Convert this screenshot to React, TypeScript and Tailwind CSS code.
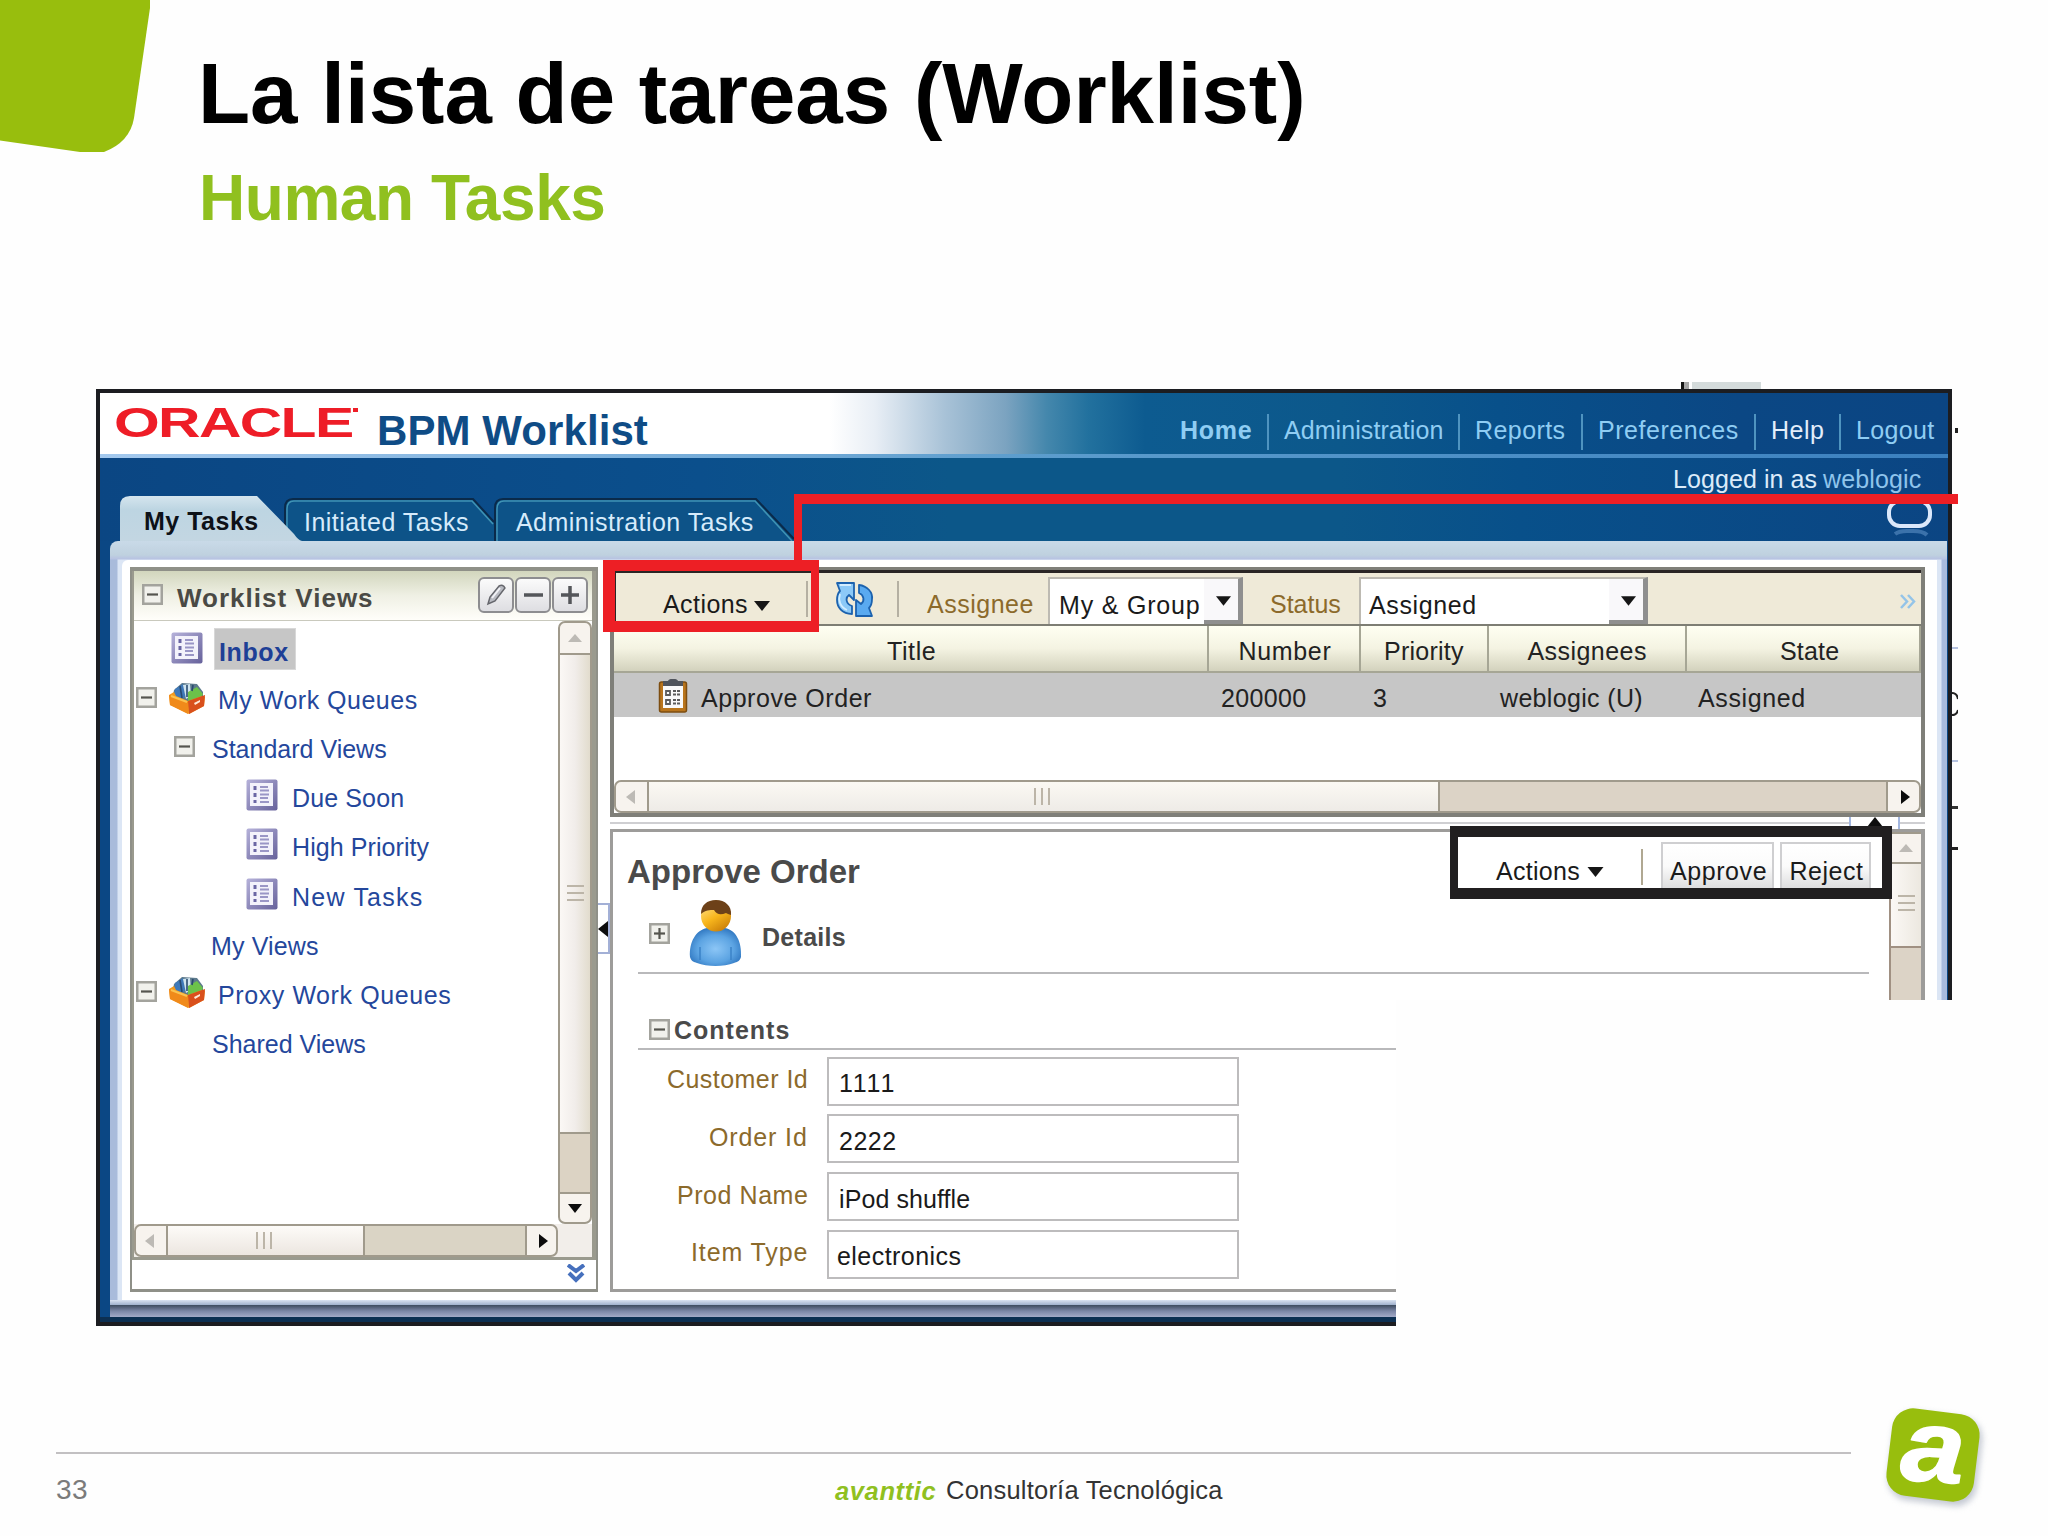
import { useLayoutEffect, useRef } from 'react';
import type { ReactNode } from 'react';
import { clsx } from 'clsx';

/* Single line of text, tracked so that it fills the width of its box. */
function Fit({ className, children }: { className?: string; children: string }) {
  const box = useRef<HTMLSpanElement>(null);
  const text = useRef<HTMLSpanElement>(null);

  useLayoutEffect(() => {
    if (!box.current || !text.current) return;
    text.current.style.letterSpacing = '0px';
    const spare = box.current.clientWidth - text.current.offsetWidth;
    text.current.style.letterSpacing = `${spare / children.length}px`;
  }, [children]);

  return (
    <span ref={box} className={clsx('block shrink-0 leading-none whitespace-nowrap', className)}>
      <span ref={text} className="inline-block">{children}</span>
    </span>
  );
}

/* ---------- icons ---------- */

function Toggle({ open = true, className }: { open?: boolean; className?: string }) {
  return (
    <svg viewBox="0 0 21 21" className={clsx('w-[21px] h-[21px] shrink-0', className)}>
      <rect x="1.25" y="1.25" width="18.5" height="18.5" fill="#f1f1ec" stroke="#a3a39d" strokeWidth="2.5" />
      <path d="M5 10.5h11" stroke="#55554f" strokeWidth="2.2" />
      {!open && <path d="M10.5 5v11" stroke="#55554f" strokeWidth="2.2" />}
    </svg>
  );
}

function ListIcon() {
  return (
    <svg viewBox="0 0 32 32" className="w-8 h-8 shrink-0 mb-[7px]">
      <defs>
        <linearGradient id="lst" x1="0" y1="0" x2="1" y2="1">
          <stop offset="0" stopColor="#b6b2da" />
          <stop offset="1" stopColor="#66619b" />
        </linearGradient>
      </defs>
      <rect x="0.5" y="0.5" width="31" height="31" rx="2" fill="url(#lst)" />
      <rect x="4" y="4" width="23" height="23" fill="#f3f2fb" />
      <path d="M9 7v4M9 14v4M9 21v3" stroke="#6a66a4" strokeWidth="3" />
      <path d="M14 8h8M14 11.500h9M14 15.500h9M14 19h8M14 23h9" stroke="#9a96c6" strokeWidth="1.8" />
    </svg>
  );
}

function QueueIcon() {
  return (
    <svg viewBox="0 0 38 32" className="w-[38px] h-8 shrink-0 mb-[6px]">
      <path d="M6 8 14 1l15 1 6 8v9H4z" fill="#5d7a8c" />
      <path d="M7 7l8-5 3 12-6 4-6-3z" fill="#3f79b9" />
      <path d="M15 3l7-1 1 12-5 3z" fill="#cfe4ef" />
      <path d="M20 10l9-5 6 7-3 6-12 1z" fill="#6cc24a" />
      <path d="M12 4l2 12M19 3v12M25 3l-1 6" stroke="#294a70" strokeWidth="1.6" />
      <path d="M1 13l5-3 2 4 12 5 14-5 3 1-1 9-15 8L2 23z" fill="#f39a1f" />
      <path d="M20 19l17-6-1 11-15 8z" fill="#d9501c" />
      <path d="M1 13l19 7v12L2 23z" fill="#f08a1a" />
      <path d="M3 14l16 6" stroke="#fbc34f" strokeWidth="2" />
      <path d="M26 21l6-3v2l-5 3z" fill="#ffe9d8" />
    </svg>
  );
}

function RefreshIcon() {
  return (
    <svg viewBox="0 0 38 36" className="w-[38px] h-9 shrink-0 mb-[8px]">
      <g stroke="#1c62ae" strokeWidth="1.8" strokeLinejoin="round">
        <path d="M1 1h17v17l-5-5c-4 3-3 9 3 11v8C6 32 1 25 1 18c0-4 1-7 3-9z" fill="#8cc9f7" />
        <path d="M36 34H20V18l5 4c4-3 3-9-2-11V3c8 1 14 7 13 14 0 4-1 7-3 9z" fill="#5aaaf0" />
      </g>
      <path d="M4 3h11M4 12c-2 6 0 13 7 16" stroke="#d3edff" strokeWidth="1.8" fill="none" />
    </svg>
  );
}

function ClipboardIcon() {
  return (
    <svg viewBox="0 0 30 34" className="w-[30px] h-[34px] shrink-0 mb-[5px]">
      <rect x="1.500" y="3" width="27" height="30" rx="2" fill="#b9751c" stroke="#7d4d10" strokeWidth="1.500" />
      <path d="M5 6h20v23H5z" fill="#fafafa" />
      <path d="M5 2h5c1-3 9-3 10 0h5v5H5z" fill="#50545c" />
      <g fill="none" stroke="#5c5c5c" strokeWidth="1.800">
        <path d="M8 12h4v4H8zM8 21h4v4H8z" />
        <path d="M15 12h7M15 15.500h7M15 21h7M15 24.500h7" strokeDasharray="3 1" />
      </g>
    </svg>
  );
}

function PersonIcon() {
  return (
    <svg viewBox="0 0 53 67" className="w-[53px] h-[67px] shrink-0">
      <defs>
        <radialGradient id="body" cx="0.5" cy="0.55" r="0.6">
          <stop offset="0" stopColor="#8cc6f6" />
          <stop offset="0.6" stopColor="#5ba3e2" />
          <stop offset="1" stopColor="#2b72bd" />
        </radialGradient>
        <linearGradient id="face" x1="0" y1="0" x2="0.6" y2="1">
          <stop offset="0" stopColor="#ffe9a0" />
          <stop offset="0.6" stopColor="#f8b61c" />
          <stop offset="1" stopColor="#cf850b" />
        </linearGradient>
      </defs>
      <path d="M1 57C0 42 7 30 18 28h18c11 2 17 14 16 29-1 4-4 5-7 6-10 4-27 4-37 0-3-1-6-2-7-6z" fill="url(#body)" />
      <path d="M11 60V47M42 60V47" stroke="#3b82c8" strokeWidth="1.500" />
      <ellipse cx="27" cy="16" rx="15" ry="15.500" fill="url(#face)" />
      <path d="M12 14C12 5 18 0 27 0s16 6 15 15c-2-1-4-1-5-2-5 2-9 2-12-3-4 0-9 0-13 4z" fill="#6d4119" />
    </svg>
  );
}

function Caret({ className }: { className?: string }) {
  return (
    <svg viewBox="0 0 16 10" className={clsx('w-4 h-[10px] shrink-0', className)}>
      <path d="M0 0h16L8 10z" fill="#161616" />
    </svg>
  );
}

/* ---------- scroll bars ---------- */

const arrows = {
  left: 'M11 1v14L2 8z',
  right: 'M5 1v14l9-7z',
  up: 'M1 12h14L8 4z',
  down: 'M1 4h14l-7 9z',
};

function ScrollButton({ dir, dim, className }: { dir: keyof typeof arrows; dim?: boolean; className?: string }) {
  return (
    <div className={clsx('flex items-center justify-center shrink-0 bg-[#f7f3ee] border-2 border-[#a09a8c]', className)}>
      <svg viewBox="0 0 16 16" className="w-4 h-4">
        <path d={arrows[dir]} fill={dim ? '#bdbab5' : '#0c0c0c'} />
      </svg>
    </div>
  );
}

function Grip({ vertical }: { vertical?: boolean }) {
  return (
    <div className={clsx('flex gap-[5px]', vertical && 'flex-col')}>
      {[0, 1, 2].map(i => (
        <div key={i} className={clsx('bg-[#bcb5a8]', vertical ? 'w-[17px] h-[2px]' : 'w-[2px] h-[17px]')} />
      ))}
    </div>
  );
}

/* ---------- top banner ---------- */

function NavLine() {
  return <div className="w-[2px] h-9 mx-[15px] shrink-0 bg-[#4f94c0]" />;
}

function Banner() {
  return (
    <div className="h-[61px] flex items-start shrink-0 bg-[linear-gradient(90deg,#ffffff_0,#ffffff_730px,#e8eef5_775px,#a8c2d7_845px,#7ba3c0_906px,#4487ac_947px,#22719e_988px,#0d5b90_1045px,#0c588b_1240px,#08508a_1400px,#0b4784_1640px,#0b4583_100%)]">
      <div className="ml-[14px] mt-[9px] w-[250px] shrink-0 flex text-[#ee1d27]">
        <Fit className="w-[170px] text-[42px] font-bold scale-x-[1.4] origin-left">ORACLE</Fit>
        <div className="w-[5px] h-[4px] mt-[6px] ml-[69px] shrink-0 bg-[#ee1d27]" />
      </div>
      <Fit className="mt-[17px] ml-[13px] w-[271px] text-[42px] font-bold text-[#0f4c86]">BPM Worklist</Fit>
      <div className="mt-[21px] ml-[532px] h-9 flex items-center text-[25px] text-[#8fcdf3]">
        <Fit className="w-[72px] font-bold mb-[3px]">Home</Fit>
        <NavLine />
        <Fit className="w-[159px] mb-[3px]">Administration</Fit>
        <NavLine />
        <Fit className="w-[91px] mb-[3px]">Reports</Fit>
        <NavLine />
        <Fit className="w-[141px] mb-[3px]">Preferences</Fit>
        <NavLine />
        <Fit className="w-[53px] mb-[3px] text-[#e3eefb]">Help</Fit>
        <NavLine />
        <Fit className="w-[78px] mb-[3px]">Logout</Fit>
      </div>
    </div>
  );
}

function Tabs() {
  return (
    <div className="flex items-end h-[45px] pl-[20px] text-[25px] text-[#d6ebfb]">
      <div className="relative z-10 w-[182px] h-[45px] shrink-0 text-[#0d1118]">
        <svg viewBox="0 0 182 45" className="absolute inset-0 w-[182px] h-[45px]">
          <defs>
            <linearGradient id="tab" x1="0" y1="0" x2="0" y2="1">
              <stop offset="0" stopColor="#d5e5ee" />
              <stop offset="0.3" stopColor="#bdd5e2" />
              <stop offset="1" stopColor="#c3d6e2" />
            </linearGradient>
          </defs>
          <path d="M0 45V10Q0 0 10 0h127l37 38q4 6 8 7z" fill="url(#tab)" />
        </svg>
        <Fit className="relative mt-[13px] ml-[24px] w-[115px] font-bold">My Tasks</Fit>
      </div>
      <div className="relative -ml-[18px] w-[210px] h-[43px] shrink-0">
        <svg viewBox="0 0 210 43" className="absolute inset-0 w-[210px] h-[43px]">
          <path d="M1 43V10q0-9 8-9h180l21 23v19z" fill="#0d5388" />
          <path d="M1 43V10q0-9 8-9h180l21 23" fill="none" stroke="#0a2a4a" strokeWidth="2" />
          <path d="M3 43V11q0-8 7-8h178l21 23" fill="none" stroke="#3f93b4" strokeWidth="1.5" />
        </svg>
        <Fit className="relative mt-[12px] ml-[20px] w-[165px]">Initiated Tasks</Fit>
      </div>
      <div className="relative w-[306px] h-[43px] shrink-0">
        <svg viewBox="0 0 306 43" className="absolute inset-0 w-[306px] h-[43px]">
          <path d="M1 43V10q0-9 8-9h253l38 40v2z" fill="#0d5388" />
          <path d="M1 43V10q0-9 8-9h253l38 40" fill="none" stroke="#0a2a4a" strokeWidth="2" />
          <path d="M3 43V11q0-8 7-8h251l37 40" fill="none" stroke="#3f93b4" strokeWidth="1.5" />
        </svg>
        <Fit className="relative mt-[12px] ml-[22px] w-[238px]">Administration Tasks</Fit>
      </div>
      <svg viewBox="0 0 48 42" className="w-12 h-[42px] ml-auto mr-[13px] shrink-0">
        <rect x="2" y="2" width="41" height="25" rx="11" fill="none" stroke="#dbe8fb" strokeWidth="4" />
        <path d="M8 35q4-3 12-3h6q10 0 14 4" fill="none" stroke="#5b90c4" strokeWidth="4" opacity="0.6" />
      </svg>
    </div>
  );
}

/* ---------- left pane ---------- */

function Row({ className, children }: { className?: string; children: ReactNode }) {
  return <div className={clsx('h-[49.1px] flex items-center', className)}>{children}</div>;
}

function PaneButton({ children }: { children: ReactNode }) {
  return (
    <div className="w-9 h-9 rounded-[6px] border-2 border-[#8d8d90] bg-linear-to-b from-[#fbfbfb] to-[#dedee2] flex items-center justify-center">
      <svg viewBox="0 0 24 24" className="w-6 h-6">{children}</svg>
    </div>
  );
}

function WorklistViews() {
  return (
    <div className="w-[468px] h-[725px] shrink-0 flex flex-col border-2 border-t-4 border-b-[3px] border-[#8f9088]">
      <div className="flex flex-col border-l-2 border-r-4 border-b-[3px] border-[#9a9a8e] shrink-0">
        <div className="h-[50px] flex items-center pl-[8px] pr-[4px] border-b border-[#c9c9bd] bg-linear-to-b from-[#d2d6bd] via-[#eff0e4] to-[#fffefa]">
          <Toggle className="mb-[3px]" />
          <Fit className="ml-[14px] mt-[4px] w-[197px] text-[26px] font-bold text-[#4a4a45]">Worklist Views</Fit>
          <div className="ml-auto flex gap-px mb-[2px]">
            <PaneButton>
              <path d="M4 21l2-7L15 3q4-2 6 2L11 18z" fill="#b9bbc2" stroke="#65666c" strokeWidth="1.500" />
              <path d="M8 15l8-10" stroke="#f2f2f6" strokeWidth="2" />
            </PaneButton>
            <PaneButton><path d="M3 12h19" stroke="#54565a" strokeWidth="3.500" /></PaneButton>
            <PaneButton><path d="M3 12h18M12 3v18" stroke="#54565a" strokeWidth="3.500" /></PaneButton>
          </div>
        </div>

        <div className="h-[603px] flex">
          <div className="flex-1 pt-[6px] text-[25px] text-[#24479c]">
            <Row className="pl-[37px]">
              <ListIcon />
              <div className="ml-[11px] w-[82px] h-[42px] mb-[5px] pt-[3px] flex items-center bg-[#c6c6c6] border border-[#d8d8d8]">
                <Fit className="ml-[4px] mt-[3px] w-[70px] font-bold text-[#1e3f96]">Inbox</Fit>
              </div>
            </Row>
            <Row className="pl-[2px]">
              <Toggle className="mb-[7px]" />
              <div className="ml-[11px]"><QueueIcon /></div>
              <Fit className="ml-[12px] w-[200px]">My Work Queues</Fit>
            </Row>
            <Row className="pl-[40px]">
              <Toggle className="mb-[7px]" />
              <Fit className="ml-[17px] w-[175px]">Standard Views</Fit>
            </Row>
            <Row className="pl-[112px]">
              <ListIcon />
              <Fit className="ml-[14px] w-[112px]">Due Soon</Fit>
            </Row>
            <Row className="pl-[112px]">
              <ListIcon />
              <Fit className="ml-[14px] w-[137px]">High Priority</Fit>
            </Row>
            <Row className="pl-[112px]">
              <ListIcon />
              <Fit className="ml-[14px] w-[131px]">New Tasks</Fit>
            </Row>
            <Row className="pl-[77px]"><Fit className="w-[108px]">My Views</Fit></Row>
            <Row className="pl-[2px]">
              <Toggle className="mb-[7px]" />
              <div className="ml-[11px]"><QueueIcon /></div>
              <Fit className="ml-[12px] w-[233px]">Proxy Work Queues</Fit>
            </Row>
            <Row className="pl-[78px]"><Fit className="w-[154px]">Shared Views</Fit></Row>
          </div>
          <div className="w-[34px] flex flex-col shrink-0">
            <ScrollButton dir="up" dim className="h-[34px] rounded-t-[7px]" />
            <div className="h-[477px] border-x-2 border-[#a09a8c] flex items-center justify-center bg-linear-to-r from-[#fbf8f5] via-[#f1edea] to-[#e2dccd]">
              <div className="-mt-[2px]"><Grip vertical /></div>
            </div>
            <div className="h-[60px] border-2 border-b-0 border-[#a09a8c] bg-[#dcd3c4]" />
            <ScrollButton dir="down" className="h-8 rounded-b-[7px]" />
          </div>
        </div>

        <div className="h-[33px] flex bg-[#f2eeea]">
          <ScrollButton dir="left" dim className="w-[34px] rounded-l-[7px]" />
          <div className="w-[195px] border-y-2 border-[#a09a8c] flex items-center justify-center bg-linear-to-b from-[#fdfbf8] to-[#ece6e0]">
            <div className="-ml-1"><Grip /></div>
          </div>
          <div className="w-[162px] border-2 border-r-0 border-[#a09a8c] bg-[#dad4c5]" />
          <ScrollButton dir="right" className="w-[33px] rounded-r-[7px]" />
        </div>
      </div>
      <div className="flex-1 flex items-start justify-end pr-[11px] pt-[4px] bg-white">
        <svg viewBox="0 0 18 19" className="w-[18px] h-[19px]">
          <path d="M1 1l8 6 8-6M2 9l7 7 7-7" fill="none" stroke="#4670bd" strokeWidth="4" />
        </svg>
      </div>
    </div>
  );
}

/* ---------- task list ---------- */

function Select({ className, children }: { className?: string; children: ReactNode }) {
  return (
    <div className={clsx('h-[47px] self-end -mt-[11px] flex items-center shrink-0 bg-white border-2 border-b-0 border-r-[5px] border-[#bdbab2] border-r-[#8f8f8f]', className)}>
      {children}
      <div className="ml-auto w-[34px] h-full pl-[4px] flex justify-center bg-[#f9f8fa] border-b-4 border-[#8f8f8f]">
        <Caret className="mt-[17px] w-[15px]" />
      </div>
    </div>
  );
}

function HeadCell({ className, children }: { className?: string; children: ReactNode }) {
  return <div className={clsx('flex items-center justify-center pt-[5px] border-r-2 border-[#a6a695]', className)}>{children}</div>;
}

function TaskList() {
  return (
    <div className="h-[250px] flex flex-col border-t-[3px] border-x-4 border-b-4 border-[#7f7f79]">
      <div className="h-[54px] pt-[11px] flex items-center shrink-0 border-t-[3px] border-[#2a2525] bg-[#efead8] text-[25px] text-[#1a1a1a]">
        <Fit className="ml-[49px] w-[85px]">Actions</Fit>
        <Caret className="ml-[6px] mt-[4px]" />
        <div className="ml-[36px] mb-[10px] w-[2px] h-9 bg-[#b5b0a2]" />
        <div className="ml-[28px]"><RefreshIcon /></div>
        <div className="ml-[23px] mb-[10px] w-[2px] h-9 bg-[#b5b0a2]" />
        <Fit className="ml-[28px] w-[107px] text-[#8c6a2b]">Assignee</Fit>
        <Select className="ml-[14px] w-[195px]">
          <Fit className="ml-[9px] mt-[7px] w-[141px]">My &amp; Group</Fit>
        </Select>
        <Fit className="ml-[27px] w-[71px] text-[#8c6a2b]">Status</Fit>
        <Select className="ml-[18px] w-[289px]">
          <Fit className="ml-[8px] mt-[7px] w-[108px]">Assigned</Fit>
        </Select>
        <svg viewBox="0 0 16 15" className="w-4 h-[15px] ml-auto mr-[5px] mb-[6px]">
          <path d="M1 1l6 6.500L1 14M8 1l6 6.500L8 14" fill="none" stroke="#94c4e8" strokeWidth="2.500" />
        </svg>
      </div>

      <div className="h-[49px] shrink-0 grid grid-cols-[595px_152px_128px_198px_1fr] border-y-2 border-t-[#7e7e74] border-b-[#a6a695] bg-linear-to-b from-[#fffff2] via-[#f4f3e2] to-[#d3d2bd] text-[25px] text-[#222]">
        <HeadCell className="pl-[2px]"><Fit className="w-[49px]">Title</Fit></HeadCell>
        <HeadCell className="pl-[2px]"><Fit className="w-[93px]">Number</Fit></HeadCell>
        <HeadCell><Fit className="w-[80px]">Priority</Fit></HeadCell>
        <HeadCell><Fit className="w-[119px]">Assignees</Fit></HeadCell>
        <HeadCell className="pl-[13px] border-r-0"><Fit className="w-[59px]">State</Fit></HeadCell>
      </div>

      <div className="h-[44px] shrink-0 grid grid-cols-[595px_152px_128px_198px_1fr] items-center pt-[6px] bg-[#c6c6c6] text-[25px] text-[#222]">
        <div className="flex items-center pl-[44px] h-[37px]">
          <ClipboardIcon />
          <Fit className="ml-[13px] w-[171px]">Approve Order</Fit>
        </div>
        <Fit className="ml-[12px] w-[85px]">200000</Fit>
        <Fit className="ml-[12px] w-[14px]">3</Fit>
        <Fit className="ml-[11px] w-[143px]">weblogic (U)</Fit>
        <Fit className="ml-[11px] w-[108px]">Assigned</Fit>
      </div>

      <div className="flex-1 bg-white" />

      <div className="h-[33px] flex shrink-0">
        <ScrollButton dir="left" dim className="w-[35px] rounded-l-[7px]" />
        <div className="w-[789px] border-y-2 border-[#a09a8c] flex items-center justify-center bg-linear-to-b from-[#fbf9f3] to-[#eeebe7]">
          <div className="-ml-1"><Grip /></div>
        </div>
        <div className="flex-1 border-2 border-r-0 border-[#a09a8c] bg-[#dcd3c6]" />
        <ScrollButton dir="right" className="w-[35px] rounded-r-[7px]" />
      </div>
    </div>
  );
}

/* ---------- task detail ---------- */

function Field({ label, value }: { label: ReactNode; value: ReactNode }) {
  return (
    <div className="h-[48px] mb-[9.8px] flex items-center">
      <div className="w-[195px] flex justify-end mb-[3px] text-[#8c6a2b]">{label}</div>
      <div className="ml-[19px] w-[412px] h-[49px] pl-[10px] pt-[5px] flex items-center border-2 border-[#bdbcbd] bg-white text-[#1a1a1a]">{value}</div>
    </div>
  );
}

function TaskDetail() {
  return (
    <div className="h-[463px] flex border-[3px] border-r-4 border-[#9d9c9a]">
      <div className="flex-1 bg-white text-[#4a4a4a]">
        <Fit className="mt-[23px] ml-[14px] w-[233px] text-[33px] font-bold">Approve Order</Fit>
        <div className="mt-[12px] h-[66px] flex items-center">
          <Toggle open={false} className="ml-[36px]" />
          <div className="ml-[19px]"><PersonIcon /></div>
          <Fit className="ml-[20px] mt-[8px] w-[84px] text-[25px] font-bold">Details</Fit>
        </div>
        <div className="mt-[6px] ml-[25px] w-[1231px] h-[2px] bg-[#b9b9bb]" />
        <div className="mt-[42px] h-[27px] flex items-center">
          <Toggle className="ml-[36px]" />
          <Fit className="ml-[4px] mt-[2px] w-[116px] text-[25px] font-bold">Contents</Fit>
        </div>
        <div className="mt-[5px] ml-[25px] h-[2px] bg-[#b9b9bb]" />
        <div className="pt-[7px] text-[25px]">
          <Field label={<Fit className="w-[141px]">Customer Id</Fit>} value={<Fit className="w-[57px]">1111</Fit>} />
          <Field label={<Fit className="w-[99px]">Order Id</Fit>} value={<Fit className="w-[58px]">2222</Fit>} />
          <Field label={<Fit className="w-[131px]">Prod Name</Fit>} value={<Fit className="w-[131px]">iPod shuffle</Fit>} />
          <Field label={<Fit className="w-[117px]">Item Type</Fit>} value={<Fit className="-ml-[2px] w-[125px]">electronics</Fit>} />
        </div>
      </div>
      <div className="w-8 flex flex-col shrink-0">
        <ScrollButton dir="up" dim className="h-8 border-r-0" />
        <div className="h-[84px] border-x-2 border-b-2 border-r-0 border-[#a09082] flex items-center justify-center bg-linear-to-r from-[#fbf8f5] to-[#ece8e0]">
          <div className="-mt-1"><Grip vertical /></div>
        </div>
        <div className="flex-1 border-l-2 border-[#a09082] bg-[#dcd3c6]" />
      </div>
    </div>
  );
}

/* ---------- whole window ---------- */

function WorklistWindow() {
  return (
    <div className="ml-[96px] w-[1856px] h-[937px] shrink-0 flex flex-col border-4 border-[#1c1d21] bg-[#0b4784] [clip-path:polygon(0_0,100%_0,100%_611px,1300px_611px,1300px_100%,0_100%)]">
      <Banner />
      <div className="h-[4px] shrink-0 bg-linear-to-r from-[#a4c9ee] via-[#5c9dcd] to-[#3b80bf]" />
      <div className="h-[83px] shrink-0 flex flex-col justify-between bg-[linear-gradient(90deg,#0b4683_0,#0b4f8c_600px,#0c5789_850px,#0c5789_1240px,#08508a_1420px,#0b4583_100%)]">
        <div className="flex justify-end pr-[27px] pt-[9px] text-[25px]">
          <Fit className="w-[144px] text-[#dcebf9]">Logged in as</Fit>
          <Fit className="ml-[6px] w-[98px] text-[#8fc4ec]">weblogic</Fit>
        </div>
        <Tabs />
      </div>

      <div className="ml-[10px] w-[1837px] h-[776px] shrink-0 flex flex-col rounded-tl-[8px] bg-[linear-gradient(180deg,#c9dae8_0,#bfd1df_14px,#b7c2e2_18px,transparent_19px),linear-gradient(90deg,#a9bbdb_0,#a9bbdb_7px,#dce6f5_8px,#dce6f5_50%,#dce6f5_1831px,#a9bbdd_1832px)]">
        <div className="mt-[19px] ml-[12px] mr-[10px] h-[740px] shrink-0 rounded-tl-[6px] bg-white pl-[8px] pt-[7px] flex items-start">
          <WorklistViews />
          <div className="w-[12px] h-[725px] flex items-start shrink-0">
            <div className="mt-[336px] w-[13px] h-[51px] border-2 border-l-0 border-[#a3b0d6] bg-white flex items-center">
              <svg viewBox="0 0 10 16" className="w-[10px] h-4"><path d="M10 0v16L0 8z" fill="#0d0d0d" /></svg>
            </div>
          </div>
          <div className="w-[1315px] flex flex-col shrink-0">
            <TaskList />
            <div className="h-[12px] flex items-center shrink-0">
              <div className="flex-1 h-[2px] bg-[#cfcfd2]" />
              <div className="w-[51px] h-[12px] flex justify-center border-x-2 border-[#a3b7e0] bg-white">
                <svg viewBox="0 0 16 10" className="w-4 h-[10px]"><path d="M0 10h16L8 0z" fill="#0d0d0d" /></svg>
              </div>
              <div className="w-[25px] h-[2px] bg-[#cfcfd2]" />
            </div>
            <TaskDetail />
          </div>
        </div>
        <div className="h-[5px] shrink-0 bg-linear-to-b from-[#dbe4f2] to-[#9fb0cc]" />
        <div className="h-[12px] shrink-0 bg-linear-to-b from-[#3d4b5e] via-[#7b86a6] to-[#a3aac8]" />
      </div>
      <div className="flex-1 bg-[#0c2f52]" />
    </div>
  );
}

/* Black frame around the outcome buttons of the open task */
function OutcomeCallout() {
  return (
    <div className="absolute left-[1450px] top-[826px] w-[442px] h-[73px] border-y-[11px] border-l-[8px] border-r-[10px] border-[#211f20] bg-white flex items-start text-[25px] text-[#1a1a1a]">
      <Fit className="ml-[38px] mt-[22px] w-[84px]">Actions</Fit>
      <Caret className="ml-[7px] mt-[30px] w-[17px]" />
      <div className="ml-[37px] mt-[12px] w-[2px] h-9 bg-[#b0a892]" />
      <div className="ml-[18px] mt-[5px] pl-[2px] w-[113px] h-[46px] flex justify-center border-2 border-b-0 border-[#cfcfd1] bg-linear-to-b from-white via-[#fbfbfb] to-[#dededf]">
        <Fit className="mt-[15px] w-[97px]">Approve</Fit>
      </div>
      <div className="ml-[6px] mt-[5px] pl-[2px] w-[91px] h-[46px] flex justify-center border-2 border-b-0 border-[#cfcfd1] bg-linear-to-b from-white via-[#fbfbfb] to-[#dededf]">
        <Fit className="mt-[15px] w-[74px]">Reject</Fit>
      </div>
    </div>
  );
}

/* Red frame on the Actions menu, with its leader line out to the right edge */
function ActionsCallout() {
  return (
    <>
      <div className="absolute left-[794px] top-[494px] w-[1164px] h-[10px] bg-[#ed1f25]" />
      <div className="absolute left-[794px] top-[494px] w-[8px] h-[70px] bg-[#ed1f25]" />
      <div className="absolute left-[603px] top-[560px] w-[216px] h-[72px] border-y-[11px] border-l-[12px] border-r-[8px] border-[#ed1f25]">
        <div className="w-full h-full border-t-2 border-l border-[#2a2525]" />
      </div>
    </>
  );
}

/* Slivers of the window that lies behind the worklist */
function BehindEdges() {
  return (
    <>
      <div className="absolute left-[1681px] top-[382px] h-[7px] flex">
        <div className="w-[3px] bg-[#151515]" />
        <div className="w-[5px] bg-[#a5a5a5]" />
        <div className="ml-[3px] w-[69px] bg-[#d4dbdb]" />
      </div>
      <div className="absolute left-[1955px] top-[428px] w-[3px] h-[5px] bg-[#222]" />
      <div className="absolute left-[1952px] top-[647px] w-[6px] h-[2px] bg-[#b5c2e0]" />
      <svg viewBox="0 0 6 24" className="absolute left-[1952px] top-[692px] w-[6px] h-6">
        <path d="M0 1q5 0 6 6M0 23q5 0 6-5" fill="none" stroke="#222" strokeWidth="2" />
      </svg>
      <div className="absolute left-[1952px] top-[760px] w-[6px] h-[2px] bg-[#b5c2e0]" />
      <div className="absolute left-[1952px] top-[806px] w-[6px] h-[3px] bg-[#333]" />
      <div className="absolute left-[1952px] top-[847px] w-[6px] h-[3px] bg-[#222]" />
    </>
  );
}

export default function App() {
  return (
    <div className="relative w-[2048px] h-[1536px] overflow-hidden flex flex-col bg-[#fefefe] font-['Liberation_Sans',Arial,sans-serif]">
      <svg viewBox="0 0 152 154" className="absolute left-0 top-0 w-[152px] h-[154px]">
        <path d="M0 0h150v8l-16 110q-4 24-30 34H80L0 140.500z" fill="#98be0d" />
      </svg>
      <header className="h-[389px] pl-[198px] pt-[51px] shrink-0">
        <Fit className="w-[1108px] text-[85.3px] font-bold text-black">La lista de tareas (Worklist)</Fit>
        <Fit className="mt-[30px] ml-px w-[406px] text-[64px] font-bold text-[#90c01f]">Human Tasks</Fit>
      </header>

      <WorklistWindow />
      <BehindEdges />
      <ActionsCallout />
      <OutcomeCallout />

      <footer className="flex-1 pt-[126px] flex flex-col">
        <div className="ml-[56px] w-[1795px] h-[2px] bg-[#c2c0c2]" />
        <div className="flex pt-[22px]">
          <Fit className="ml-[56px] w-[32px] text-[28px] text-[#7b7b7b]">33</Fit>
          <Fit className="ml-[747px] mt-[3px] w-[101px] text-[25.5px] font-bold italic text-[#90c01f]">avanttic</Fit>
          <Fit className="ml-[10px] mt-[2px] w-[277px] text-[25.5px] text-[#333]">Consultoría Tecnológica</Fit>
        </div>
      </footer>

      <svg viewBox="-10 -20 150 150" className="absolute left-[1863px] top-[1375px] w-[150px] h-[150px]">
        <g transform="rotate(7 60 60)">
          <rect x="18" y="19" width="89" height="89" rx="21" fill="#c3c8d2" className="blur-[3px]" />
          <rect x="16" y="16" width="88" height="88" rx="21" fill="#98be0d" />
        </g>
        <text
          x="25"
          y="86.500"
          transform="rotate(4 60 60) scale(1.12 1)"
          className="text-[102px] font-bold italic"
          fill="#fff"
          stroke="#fff"
          strokeWidth="1.500"
          strokeLinejoin="round"
        >
          a
        </text>
      </svg>
    </div>
  );
}
